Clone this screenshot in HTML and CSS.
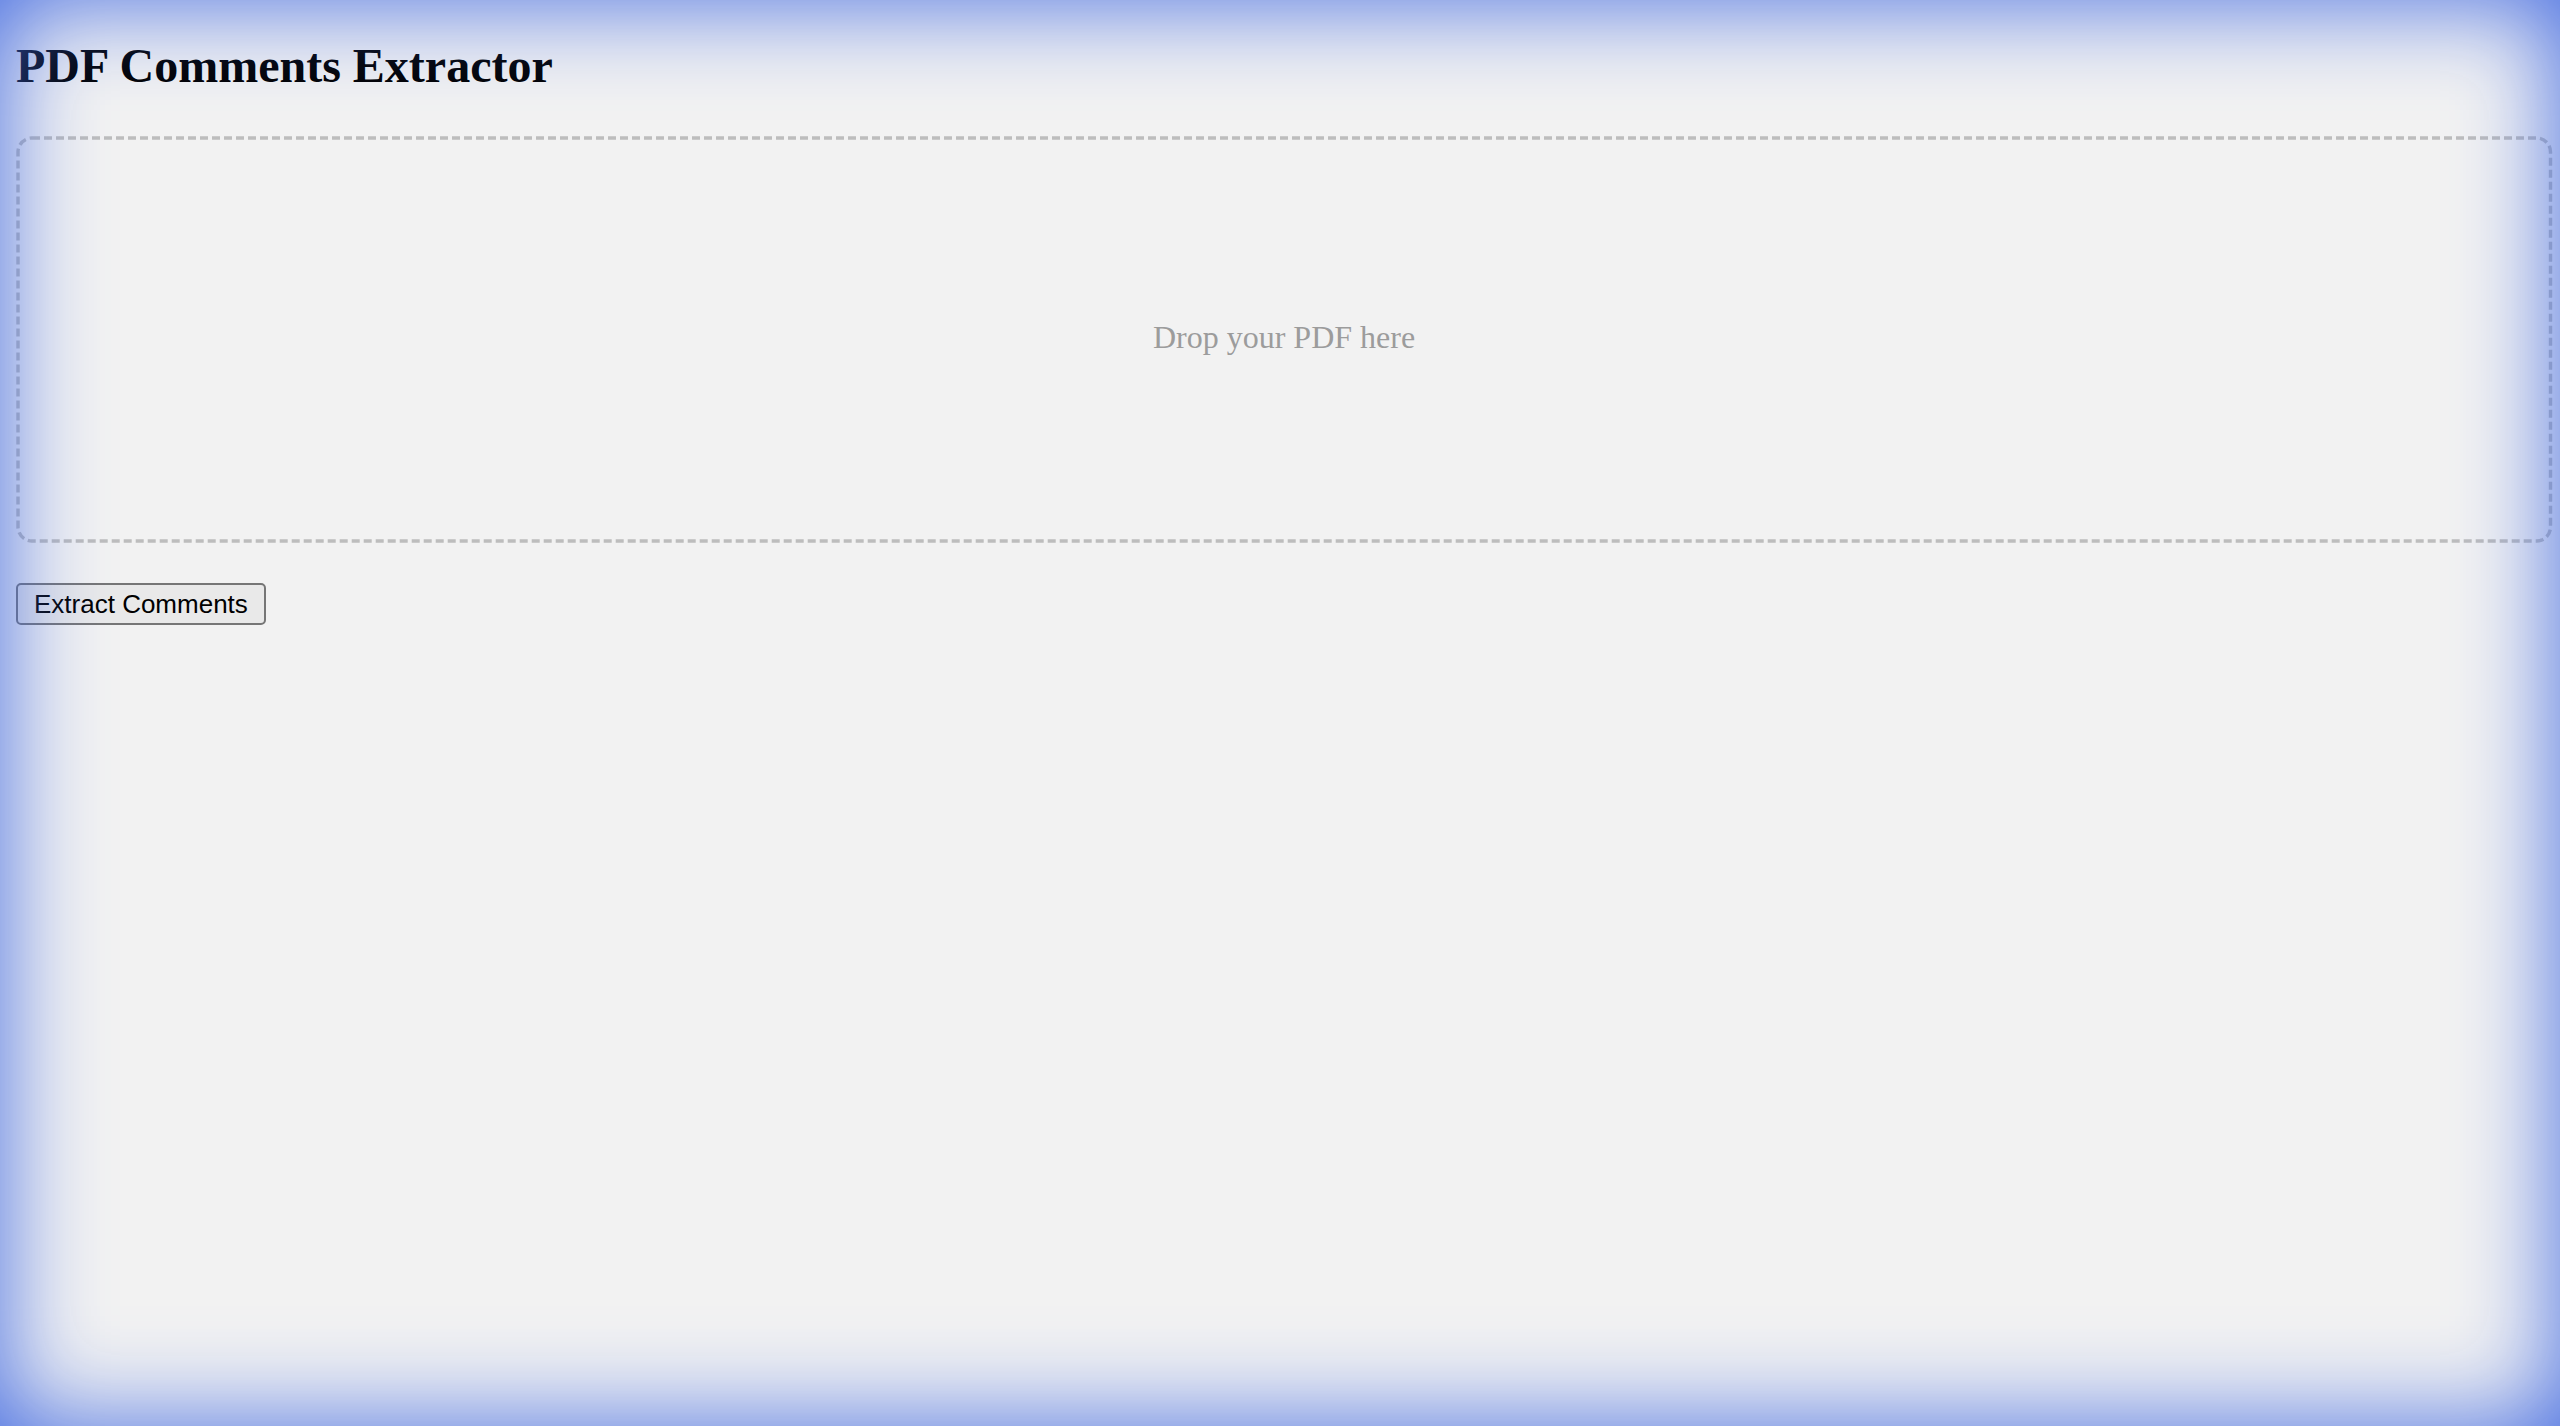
FILE: index.html
```html
<!DOCTYPE html>
<html lang="en">
<head>
<meta charset="utf-8">
<title>PDF Comments Extractor</title>
<link rel="stylesheet" href="styles.css">
</head>
<body>
  <h1 class="title">PDF Comments Extractor</h1>
  <div class="dropzone">
    <svg class="dropzone-outline" aria-hidden="true"><rect width="100%" height="100%" rx="14" ry="14"></rect></svg>
    <span class="dropzone-text">Drop your PDF here</span>
  </div>
  <button class="extract-btn" type="button">Extract Comments</button>
  <div class="vignette" aria-hidden="true"></div>
</body>
</html>
```

FILE: styles.css
```css
html, body {
  height: 100%;
}
body {
  margin: 0;
  padding: 0 16px;
  background: #f2f2f2;
  font-family: "Liberation Serif", "Times New Roman", serif;
  color: #000;
  overflow: hidden;
}
.title {
  margin: 38px 0 0;
  font-size: 48px;
  font-weight: bold;
  line-height: normal;
}
.dropzone {
  position: relative;
  box-sizing: border-box;
  width: calc(100% + 8px);
  height: 406px;
  margin-top: 43px;
  padding-bottom: 3px;
  display: flex;
  align-items: center;
  justify-content: center;
}
.dropzone-outline {
  position: absolute;
  top: 1.5px;
  left: 2px;
  width: calc(100% - 3.5px);
  height: calc(100% - 3px);
  overflow: visible;
}
.dropzone-outline rect {
  fill: none;
  stroke: #bdbdbd;
  stroke-width: 3.4px;
  stroke-dasharray: 8 4;
}
.dropzone-text {
  font-size: 32px;
  color: #9c9c9c;
}
.extract-btn {
  display: block;
  margin-top: 41px;
  box-sizing: border-box;
  height: 42px;
  padding: 0 16px;
  font-family: "Liberation Sans", Arial, sans-serif;
  font-size: 26px;
  line-height: 30px;
  color: #000;
  background: #e9e9e9;
  border: 2px solid #767676;
  border-radius: 5px;
}
.vignette {
  position: fixed;
  inset: 0;
  pointer-events: none;
  box-shadow: inset 0 0 100px rgb(65, 105, 225);
}
```
